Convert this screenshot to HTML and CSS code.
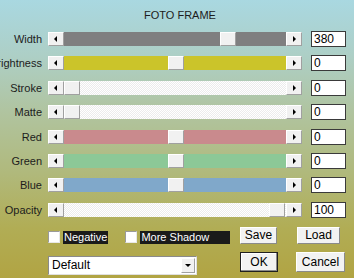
FILE: index.html
```html
<!DOCTYPE html>
<html lang="en">

<head>
    <meta charset="UTF-8">
    <meta name="viewport" content="width=device-width, initial-scale=1.0">
    <title>Foto Frame</title>
    <link rel="stylesheet" href="styles.css">
</head>

<body>
    <div class="dialog">
        <h1 class="title">FOTO FRAME</h1>

        <div class="rows">
            <div class="row">
                <span class="label">Width</span>
                <div class="scroll">
                    <span class="arrow left"></span>
                    <div class="track gray"><span class="thumb" style="margin-left:156px"></span></div>
                    <span class="arrow right"></span>
                </div>
                <input class="value" type="text" value="380">
            </div>
            <div class="row">
                <span class="label">Brightness</span>
                <div class="scroll">
                    <span class="arrow left"></span>
                    <div class="track yellow"><span class="thumb" style="margin-left:104px"></span></div>
                    <span class="arrow right"></span>
                </div>
                <input class="value" type="text" value="0">
            </div>
            <div class="row">
                <span class="label">Stroke</span>
                <div class="scroll">
                    <span class="arrow left"></span>
                    <div class="track light"><span class="thumb" style="margin-left:0px"></span></div>
                    <span class="arrow right"></span>
                </div>
                <input class="value" type="text" value="0">
            </div>
            <div class="row">
                <span class="label">Matte</span>
                <div class="scroll">
                    <span class="arrow left"></span>
                    <div class="track light"><span class="thumb" style="margin-left:0px"></span></div>
                    <span class="arrow right"></span>
                </div>
                <input class="value" type="text" value="0">
            </div>
            <div class="row">
                <span class="label">Red</span>
                <div class="scroll">
                    <span class="arrow left"></span>
                    <div class="track red"><span class="thumb" style="margin-left:104px"></span></div>
                    <span class="arrow right"></span>
                </div>
                <input class="value" type="text" value="0">
            </div>
            <div class="row">
                <span class="label">Green</span>
                <div class="scroll">
                    <span class="arrow left"></span>
                    <div class="track green"><span class="thumb" style="margin-left:104px"></span></div>
                    <span class="arrow right"></span>
                </div>
                <input class="value" type="text" value="0">
            </div>
            <div class="row">
                <span class="label">Blue</span>
                <div class="scroll">
                    <span class="arrow left"></span>
                    <div class="track blue"><span class="thumb" style="margin-left:104px"></span></div>
                    <span class="arrow right"></span>
                </div>
                <input class="value" type="text" value="0">
            </div>
            <div class="row">
                <span class="label">Opacity</span>
                <div class="scroll">
                    <span class="arrow left"></span>
                    <div class="track light"><span class="thumb" style="margin-left:205px"></span></div>
                    <span class="arrow right"></span>
                </div>
                <input class="value" type="text" value="100">
            </div>
        </div>

        <div class="bottom">
            <div class="options">
                <div class="checks">
                    <label class="check"><span class="box"></span><span class="check-text">Negative</span></label>
                    <label class="check shadow"><span class="box"></span><span class="check-text wide">More Shadow</span></label>
                </div>
                <div class="select">
                    <span class="select-text">Default</span>
                    <span class="select-btn"></span>
                </div>
            </div>

            <div class="buttons">
                <button class="btn save">Save</button>
                <button class="btn load">Load</button>
                <button class="btn ok">OK</button>
                <button class="btn cancel">Cancel</button>
            </div>
        </div>
    </div>
</body>

</html>
```

FILE: styles.css
```css
body {
    margin: 0;
    font-family: 'Liberation Sans', Arial, sans-serif;
    font-size: 11px;
    color: #1c1c1c;
    overflow: hidden;
}

.dialog {
    width: 354px;
    height: 278px;
    background: linear-gradient(#a9d8e1 0%, #adcfc6 20%, #b0c4a0 40%, #b0b97c 62%, #b1ad55 82%, #b1a443 100%);
}

.title {
    margin: 0;
    height: 31px;
    line-height: 30px;
    padding-left: 6px;
    text-align: center;
    font-size: 11px;
    font-weight: normal;
    color: #1c1c1c;
}

.rows {
    display: flex;
    flex-direction: column;
    gap: 8.4px;
}

.row {
    display: flex;
    align-items: center;
    height: 16px;
}

.label {
    width: 42px;
    margin-right: 6px;
    display: flex;
    justify-content: flex-end;
    white-space: nowrap;
    font-size: 11px;
}

.scroll {
    display: flex;
    width: 254px;
    height: 14px;
    margin-right: 9px;
}

.arrow,
.thumb {
    position: relative;
    flex: none;
    width: 16px;
    height: 14px;
    box-sizing: border-box;
    background: #f1f1f1;
    border-top: 1px solid #ffffff;
    border-left: 1px solid #ffffff;
    border-right: 1px solid #a0a0a0;
    border-bottom: 1px solid #a0a0a0;
}

.arrow::before {
    content: "";
    position: absolute;
    top: 3px;
    left: 5px;
    border-top: 3px solid transparent;
    border-bottom: 3px solid transparent;
}

.arrow.left::before {
    border-right: 3px solid #000;
}

.arrow.right::before {
    left: 6px;
    border-left: 3px solid #000;
}

.track {
    flex: 1;
    display: flex;
    height: 14px;
}

.track.gray {
    background: #7f7f80;
}

.track.yellow {
    background: #cbc42a;
}

.track.red {
    background: #c98a8d;
}

.track.green {
    background: #8cc897;
}

.track.blue {
    background: #80a8ca;
}

.track.light {
    background: repeating-conic-gradient(#ffffff 0 25%, #ececec 0 50%) 0 0 / 2px 2px;
}

.value {
    width: 35px;
    height: 16px;
    box-sizing: border-box;
    margin: 0;
    padding: 0 2px;
    border: 1px solid #3a3a3a;
    background: #ffffff;
    font-family: 'Liberation Sans', Arial, sans-serif;
    font-size: 12px;
    color: #000;
}

.bottom {
    display: flex;
    margin-top: 9px;
    padding-left: 48px;
}

.options {
    width: 192px;
    padding-top: 4px;
}

.checks {
    display: flex;
    height: 13px;
}

.check {
    display: flex;
    align-items: center;
    gap: 3px;
}

.check.shadow {
    margin-left: 17px;
}

.box {
    width: 12px;
    height: 12px;
    box-sizing: border-box;
    background: #ffffff;
    border-top: 1px solid #9a9a9a;
    border-left: 1px solid #9a9a9a;
    border-right: 1px solid #e8e8e8;
    border-bottom: 1px solid #e8e8e8;
}

.check-text {
    height: 13px;
    line-height: 13px;
    padding: 0 1px;
    background: #1a1a1a;
    color: #ffffff;
    font-size: 11px;
}

.check-text.wide {
    width: 88px;
}

.select {
    display: flex;
    align-items: center;
    width: 149px;
    height: 19px;
    box-sizing: border-box;
    margin-top: 12px;
    background: #ffffff;
    border-top: 1px solid #8a8a8a;
    border-left: 1px solid #8a8a8a;
    border-right: 1px solid #e0e0e0;
    border-bottom: 1px solid #e0e0e0;
}

.select-text {
    flex: 1;
    padding-left: 3px;
    font-size: 12px;
    color: #000;
}

.select-btn {
    position: relative;
    width: 14px;
    height: 15px;
    margin-right: 1px;
    box-sizing: border-box;
    background: #f1f1f1;
    border-top: 1px solid #ffffff;
    border-left: 1px solid #ffffff;
    border-right: 1px solid #a0a0a0;
    border-bottom: 1px solid #a0a0a0;
}

.select-btn::before {
    content: "";
    position: absolute;
    top: 5px;
    left: 3px;
    border-left: 3px solid transparent;
    border-right: 3px solid transparent;
    border-top: 3px solid #000;
}

.buttons {
    display: grid;
    grid-template-columns: 56px auto;
    grid-template-rows: 17px 20px;
    row-gap: 8px;
}

.btn {
    height: 100%;
    padding: 0;
    box-sizing: border-box;
    background: #f2f2f2;
    border-top: 1px solid #ffffff;
    border-left: 1px solid #ffffff;
    border-right: 1px solid #8a8a8a;
    border-bottom: 1px solid #8a8a8a;
    font-family: 'Liberation Sans', Arial, sans-serif;
    font-size: 12px;
    color: #000;
}

.save {
    width: 37px;
}

.load {
    width: 43px;
    margin-left: 1px;
}

.ok {
    width: 38px;
    border: 1px solid #202020;
    box-shadow: inset -1px -1px 0 #8a8a8a, inset 1px 1px 0 #ffffff;
}

.cancel {
    width: 49px;
}
```
